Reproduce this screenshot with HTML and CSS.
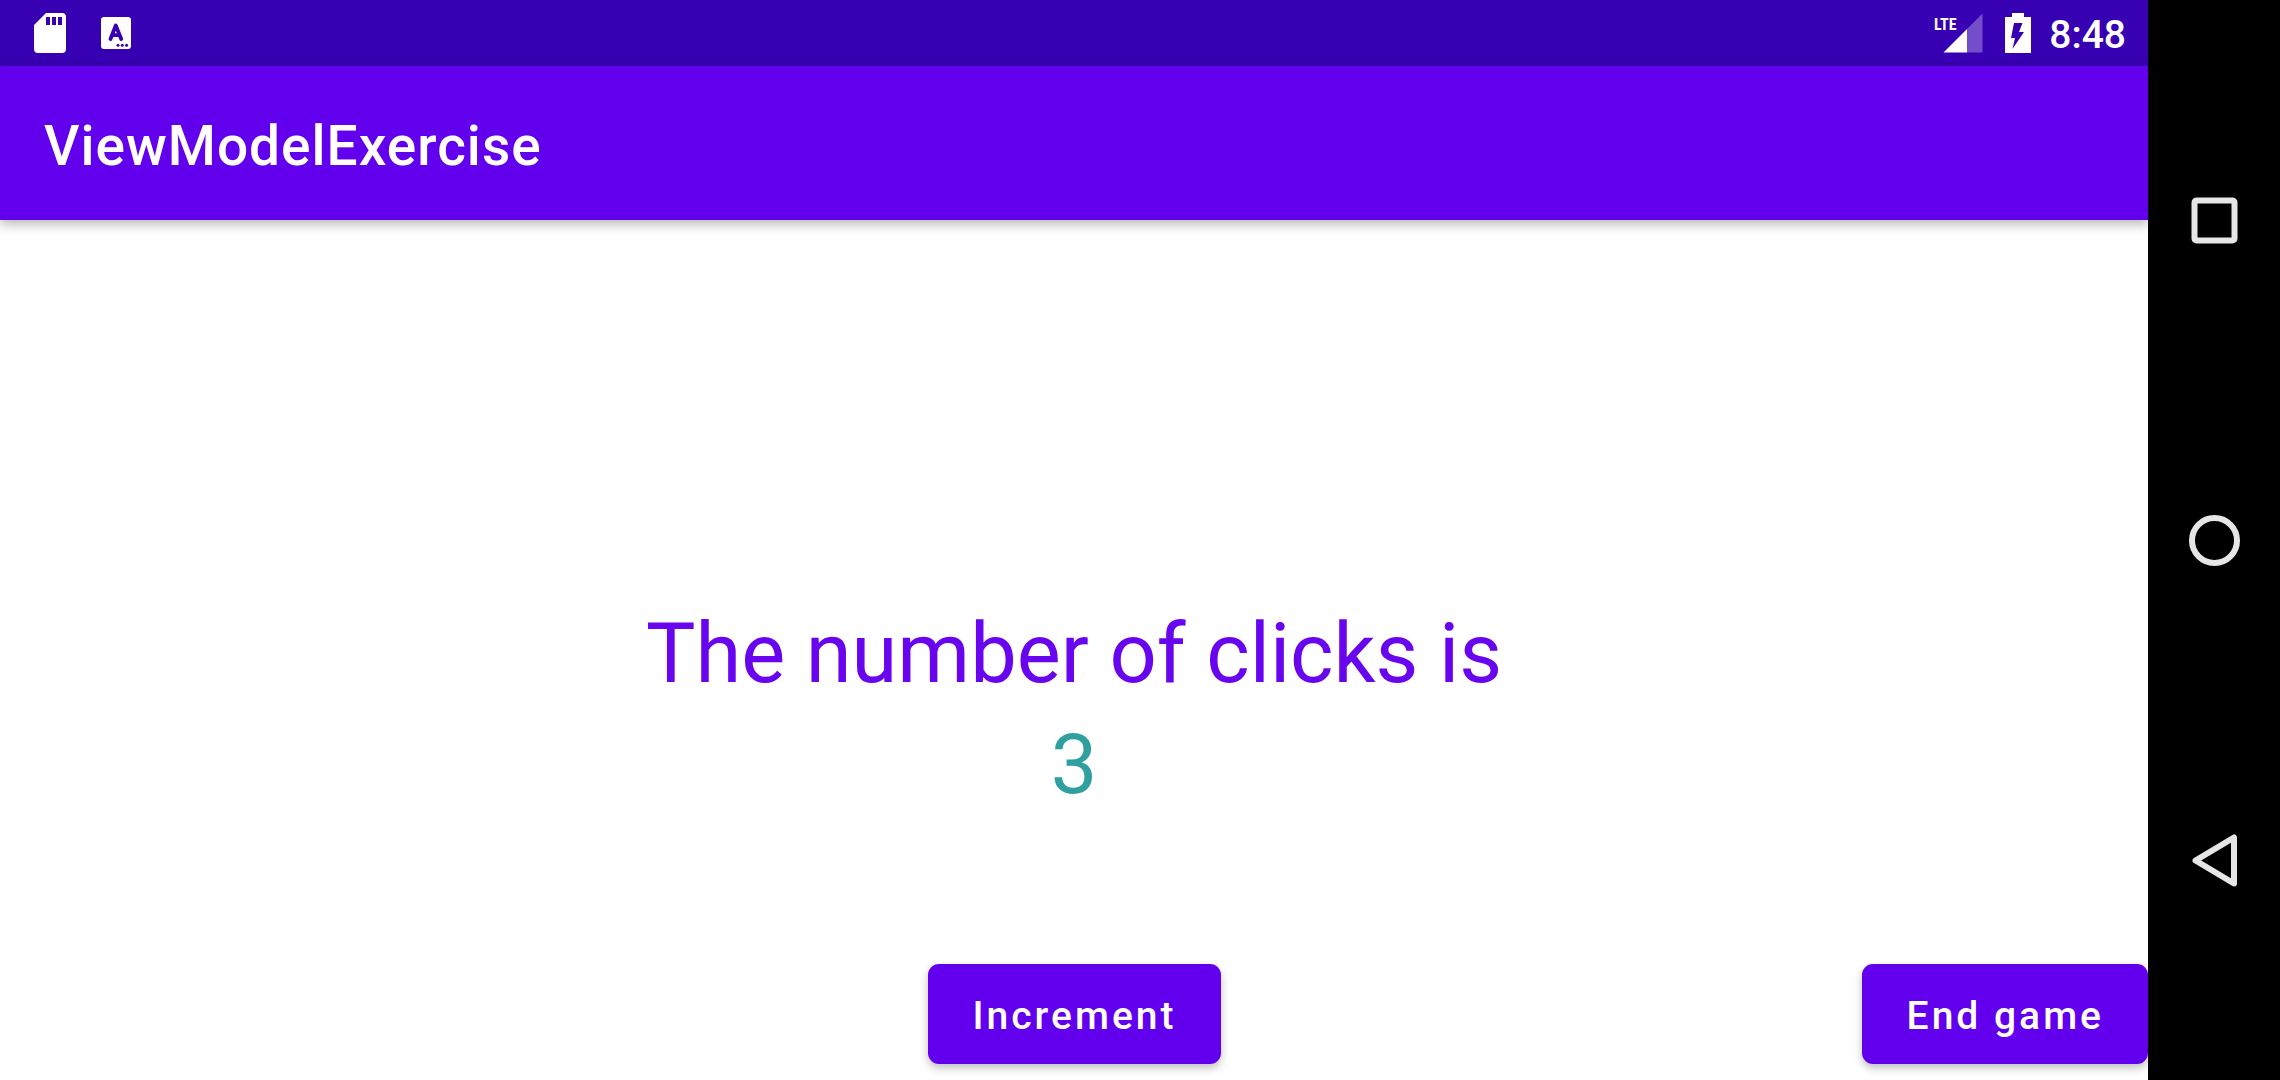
FILE: index.html
```html
<!DOCTYPE html>
<html lang="en">
<head>
  <meta charset="utf-8">
  <meta name="viewport" content="width=device-width, initial-scale=1">
  <title>ViewModelExercise</title>
  <link rel="stylesheet" href="styles.css">
</head>
<body>
  <div class="screen">
    <div class="status-bar">
      <div class="status-group notifications">
        <svg class="icon-sd" viewBox="0 0 32 40" aria-label="Storage">
          <path fill="#fff" fill-rule="evenodd" d="M12 0H28Q32 0 32 4V36Q32 40 28 40H4Q0 40 0 36V12ZM12 4V12H16V4ZM18 4V12H22V4ZM24 4V12H28V4Z"/>
        </svg>
        <svg class="icon-keyboard" viewBox="0 0 30 32" aria-label="Input method">
          <rect width="30" height="32" rx="3" fill="#fff"/>
          <path d="M9.500 22L14.800 8.500L20.200 22M11.200 18.200H18.500" fill="none" stroke="#3700b3" stroke-width="3.800" stroke-linecap="round" stroke-linejoin="round"/>
          <g fill="#3700b3"><circle cx="17" cy="28.300" r="1.500"/><circle cx="21.300" cy="28.300" r="1.500"/><circle cx="25.600" cy="28.300" r="1.500"/></g>
        </svg>
      </div>
      <div class="status-group">
        <div class="indicators">
          <svg class="icon-signal" viewBox="0 0 50 40" aria-label="Mobile signal">
            <path d="M48.500 .5V39.500H33V16Z" fill="#fff" fill-opacity=".3"/>
            <path d="M33 16V39.500H9.500Z" fill="#fff"/>
            <text class="network-type" x="0" y="17">LTE</text>
          </svg>
          <svg class="icon-battery" viewBox="0 0 26 40" aria-label="Battery charging">
            <path fill="#fff" fill-rule="evenodd" d="M7 0H19V4H26V40H0V4H7ZM9 10L6 25H10L7.500 36L19 19H14L17.500 10Z"/>
          </svg>
        </div>
        <time class="clock">8:48</time>
      </div>
    </div>
    <header class="app-bar">
      <h1 class="app-title">ViewModelExercise</h1>
    </header>
    <main class="content">
      <div class="message">
        <p class="message-label">The number of clicks is</p>
        <output class="message-count">3</output>
      </div>
      <div class="actions">
        <button class="button increment" type="button">Increment</button>
        <button class="button end-game" type="button">End game</button>
      </div>
    </main>
  </div>
  <nav class="nav-bar" aria-label="System navigation">
    <button class="nav-button" type="button" aria-label="Overview">
      <svg class="nav-icon" viewBox="0 0 66 66"><rect x="13.500" y="13.500" width="40" height="40" rx="2"/></svg>
    </button>
    <button class="nav-button" type="button" aria-label="Home">
      <svg class="nav-icon" viewBox="0 0 66 66"><circle cx="33.500" cy="33.500" r="22.500"/></svg>
    </button>
    <button class="nav-button" type="button" aria-label="Back">
      <svg class="nav-icon" viewBox="0 0 66 66"><path d="M14.500 33.500L53 10.500V56.500Z"/></svg>
    </button>
  </nav>
</body>
</html>
```
FILE: styles.css
```css
* {
  box-sizing: border-box;
}

body {
  margin: 0;
  min-height: 100vh;
  display: grid;
  grid-template-columns: 1fr 132px;
  background: #fff;
  font-family: Roboto, "Liberation Sans", sans-serif;
}

.screen {
  display: flex;
  flex-direction: column;
  overflow: hidden;
}

.status-bar {
  display: flex;
  justify-content: space-between;
  height: 66px;
  padding: 0 22px 0 34px;
  background: #3700b3;
  color: #fff;
}

.status-group {
  display: flex;
  align-items: center;
  gap: 18px;
}

.notifications {
  gap: 35px;
}

.indicators {
  display: flex;
  gap: 21px;
}

.icon-sd {
  width: 32px;
  height: 40px;
}

.icon-keyboard {
  width: 30px;
  height: 32px;
}

.icon-signal {
  width: 50px;
  height: 40px;
}

.icon-battery {
  width: 26px;
  height: 40px;
}

.network-type {
  fill: #fff;
  font-family: "Roboto Condensed", "Liberation Sans Narrow", Roboto, sans-serif;
  font-size: 16px;
  font-weight: 700;
}

.clock {
  padding-top: 4px;
  font-size: 39px;
  font-weight: 500;
}

.app-bar {
  display: flex;
  align-items: center;
  height: 154px;
  padding: 6px 44px 0;
  background: #6200ee;
  box-shadow: 0 4px 11px rgba(0, 0, 0, 0.3);
}

.app-title {
  margin: 0;
  color: #fff;
  font-size: 55px;
  font-weight: 500;
  letter-spacing: 1px;
}

.content {
  flex: 1;
  display: flex;
  flex-direction: column;
  padding-bottom: 16px;
}

.message {
  flex: 1;
  display: flex;
  flex-direction: column;
  justify-content: flex-end;
  padding-bottom: 144px;
  font-size: 83px;
  line-height: 111px;
  text-align: center;
}

.message-label {
  margin: 0;
  color: #6804ee;
}

.message-count {
  color: #309fa0;
}

.actions {
  display: grid;
  grid-template-columns: 1fr auto 1fr;
}

.button {
  height: 100px;
  padding: 4px 44px 0 45px;
  border: 0;
  border-radius: 11px;
  background: #6200ee;
  box-shadow: 0 4px 8px rgba(0, 0, 0, 0.25);
  color: #fff;
  font: 500 39px Roboto, "Liberation Sans", sans-serif;
  letter-spacing: 3px;
}

.increment {
  grid-column: 2;
}

.end-game {
  grid-column: 3;
  justify-self: end;
}

.nav-bar {
  position: relative;
  display: grid;
  grid-template-rows: repeat(3, 1fr);
  padding: 60px 0;
  background: #000;
}

.nav-button {
  display: grid;
  place-items: center;
  padding: 0;
  border: 0;
  background: none;
}

.nav-icon {
  width: 66px;
  height: 66px;
  fill: none;
  stroke: #e6e6e6;
  stroke-width: 6;
  stroke-linejoin: round;
}
```
